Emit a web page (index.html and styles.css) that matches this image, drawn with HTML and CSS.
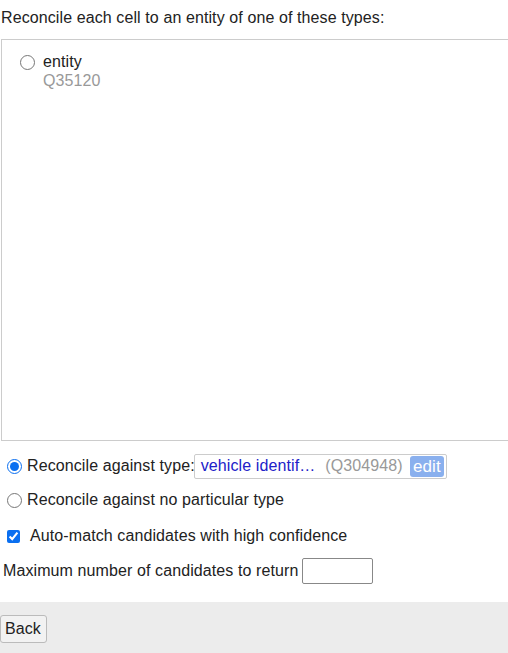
FILE: index.html
```html
<!DOCTYPE html>
<html>
<head>
<meta charset="utf-8">
<link rel="stylesheet" href="styles.css">
</head>
<body>
<div class="page">
  <div class="intro">Reconcile each cell to an entity of one of these types:</div>
  <div class="types">
    <label class="type-choice">
      <input type="radio" name="type" class="radio">
      <span class="type-info">
        <span class="type-name">entity</span>
        <span class="type-id">Q35120</span>
      </span>
    </label>
  </div>
  <div class="option row-type">
    <input type="radio" name="type" class="radio" checked>
    <span class="label">Reconcile against type:</span>
    <span class="type-input">
      <span class="type-value">vehicle identif…</span>
      <span class="type-qid">(Q304948)</span>
      <span class="edit">edit</span>
    </span>
  </div>
  <div class="option row-none">
    <input type="radio" name="type" class="radio">
    <span class="label">Reconcile against no particular type</span>
  </div>
  <div class="option row-auto">
    <input type="checkbox" class="check" checked>
    <span class="label">Auto-match candidates with high confidence</span>
  </div>
  <div class="option row-max">
    <span class="label">Maximum number of candidates to return</span>
    <input type="text" class="max-input">
  </div>
</div>
<div class="footer">
  <button class="back">Back</button>
</div>
</body>
</html>
```
FILE: styles.css
```css
html, body {
  margin: 0;
  padding: 0;
  background: #fff;
  font-family: "Liberation Sans", Arial, sans-serif;
  font-size: 16px;
  color: #222;
  overflow: hidden;
  letter-spacing: 0.1px;
}
.page {
  padding: 0 0 0 1px;
}
.intro {
  padding: 9px 0 0 0;
  height: 39px;
  box-sizing: border-box;
  line-height: 18px;
}
.types {
  border: 1px solid #ccc;
  border-right: none;
  height: 402px;
  margin-right: -10px;
  box-sizing: border-box;
  padding: 12px 0 0 18px;
}
.type-choice {
  display: flex;
  align-items: flex-start;
}
.radio {
  margin: 0;
  width: 15px;
  height: 15px;
  flex: none;
  accent-color: #0a6ff0;
}
.type-choice .radio {
  margin-top: 3px;
}
.type-info {
  display: flex;
  flex-direction: column;
  margin-left: 8px;
  line-height: 19px;
}
.type-id {
  color: #999;
}
.option {
  display: flex;
  align-items: center;
  padding-left: 6px;
}
.row-type {
  margin-top: 12px;
  height: 26px;
}
.row-type .label {
  margin-left: 5px;
}
.type-input {
  display: flex;
  align-items: center;
  border: 1px solid #ccc;
  border-radius: 2px;
  height: 25px;
  box-sizing: border-box;
  padding: 0 2px 0 6px;
  margin-left: -1px;
  width: 253px;
}
.type-value {
  color: #2121c8;
}
.type-qid {
  color: #999;
  margin-left: 10px;
}
.edit {
  margin-left: auto;
  background: #8ab0ee;
  color: #fff;
  border-radius: 3px;
  padding: 0 3px;
  line-height: 21px;
  height: 21px;
  font-size: 17px;
}
.row-none {
  margin-top: 8px;
  height: 26px;
}
.row-none .label {
  margin-left: 5px;
}
.row-auto {
  margin-top: 10px;
  height: 26px;
}
.check {
  margin: 0;
  width: 13px;
  height: 13px;
  accent-color: #0a6ff0;
}
.row-auto .label {
  margin-left: 10px;
}
.row-max {
  margin-top: 8px;
  padding-left: 2px;
  height: 28px;
}
.max-input {
  margin-left: 3px;
  width: 71px;
  height: 26px;
  box-sizing: border-box;
  border: 1px solid #888;
  border-radius: 2px;
  padding: 0;
}
.footer {
  margin-top: 17px;
  background: #ececec;
  height: 60px;
  padding-top: 13px;
  box-sizing: border-box;
}
.back {
  margin: 0;
  font-family: "Liberation Sans", Arial, sans-serif;
  font-size: 16px;
  letter-spacing: 0.1px;
  color: #222;
  background: #f2f2f2;
  border: 1px solid #bbb;
  border-radius: 3px;
  padding: 0 5px 0 4px;
  height: 28px;
}
```
